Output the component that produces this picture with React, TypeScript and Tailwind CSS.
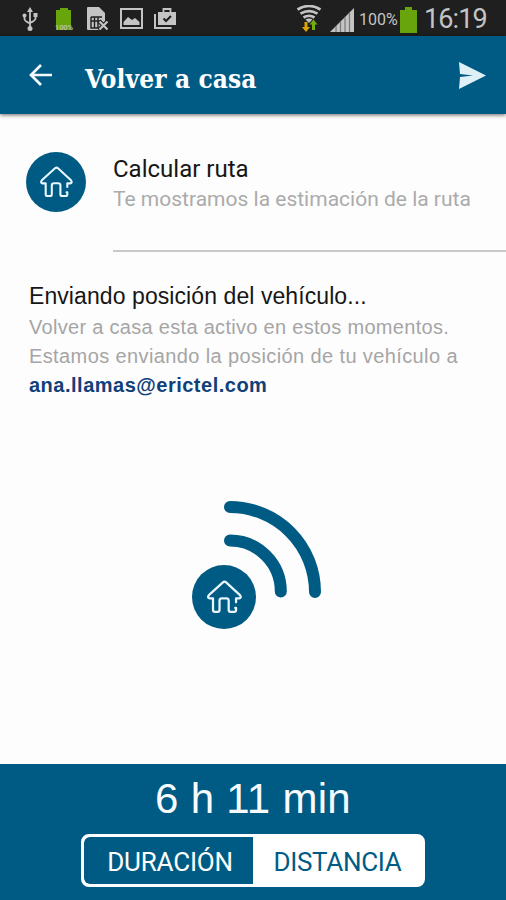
function HomeIcon({ className }: { className: string }) {
  return (
    <svg viewBox="0 0 60 60" className={className} fill="none">
      <circle cx="30" cy="30" r="30" fill="#005b84" />
      <path
        d="M41.300 35v-3.600h2.900q2.600-.8.8-3.100L32 16.300q-1.500-1.300-3 0L15.800 28.300q-1.800 2.300.8 3.100h3.100v10.800q0 1.800 1.800 1.800h2.600q1.700 0 1.700-1.800v-8.700q0-2.200 2.200-2.200h4.200q2.200 0 2.200 2.200v8.700q0 1.800 1.800 1.800h3.300q1.800 0 1.800-1.800V40.200h-.8"
        stroke="#e8f6ff"
        strokeWidth="2.100"
        strokeLinecap="round"
        strokeLinejoin="round"
      />
    </svg>
  );
}

function StatusBar() {
  return (
    <div className="flex h-9 shrink-0 items-center bg-[#1f1f1f] pl-[21px] font-[Roboto,sans-serif] text-[#c4c4c4]">
      <svg viewBox="0 0 18 24" className="mt-px h-6 w-[18px]" fill="none" stroke="#c4c4c4" strokeWidth="1.800">
        <path d="M9 3v19M3.500 9v3q0 2 5.500 4.500M14.500 8v3.500q0 2-5.500 4.500" />
        <path d="M9 0l3 5H6z" fill="#c4c4c4" stroke="none" />
        <circle cx="9" cy="21.500" r="2.500" fill="#c4c4c4" stroke="none" />
        <circle cx="3.500" cy="8.500" r="2" fill="#c4c4c4" stroke="none" />
        <path d="M12.500 6h4v4h-4z" fill="#c4c4c4" stroke="none" />
      </svg>

      <svg viewBox="0 0 20 24" className="ml-[15px] mt-px h-6 w-5">
        <path d="M6 1h8v2h3v20H2V3h4z" fill="#68a50c" />
        <text x="10" y="22.500" textAnchor="middle" textLength="18" fontSize="7.500" fontWeight="700" fill="#b5bda8">100%</text>
      </svg>

      <svg viewBox="0 0 22 24" className="ml-[13px] mt-px h-6 w-[22px]" fill="none">
        <path d="M1 0h11l6 6v10l-5 7H1q-1 0-1-1V1q0-1 1-1z" fill="#c4c4c4" />
        <path d="M4 10h11M4 10v11h8M4 14h10M7.500 10v11M11 10v11" stroke="#1f1f1f" strokeWidth="1.400" />
        <path d="M12 14l9 9M21 14l-9 9" stroke="#1f1f1f" strokeWidth="4.500" />
        <path d="M12.500 14.500l8 8M20.500 14.500l-8 8" stroke="#c4c4c4" strokeWidth="2.200" />
      </svg>

      <svg viewBox="0 0 23 21" className="ml-[11px] h-[21px] w-[23px]" fill="none">
        <path d="M1 1h21v19H1z" stroke="#c4c4c4" strokeWidth="2" />
        <path d="M3.500 17v-3l4.500-5 4 3 3-2 4.500 4v3z" fill="#c4c4c4" />
      </svg>

      <svg viewBox="0 0 23 21" className="ml-[11px] h-[21px] w-[23px]" fill="none">
        <path d="M1 6v14h16.500" stroke="#c4c4c4" strokeWidth="2" />
        <path d="M4 4h18v13H4z" fill="#c4c4c4" />
        <path d="M9.500 4V1h7v3" stroke="#c4c4c4" strokeWidth="1.800" />
        <path d="M9.500 10.500l2.500 2.500 5-5" stroke="#1f1f1f" strokeWidth="2" />
      </svg>

      <svg viewBox="0 0 26 27" className="ml-[119px] mt-px h-[27px] w-[26px]" fill="none">
        <g stroke="#c4c4c4" strokeWidth="2.700">
          <path d="M1.500 4.500q11.500-7 23 0" />
          <path d="M4.500 8.700q8.500-5 17 0" />
          <path d="M7.500 12.500q5.500-3.500 11 0" />
        </g>
        <path d="M9.500 14.500q3.500-2 7 0L13 18z" fill="#c4c4c4" />
        <path d="M8.500 17h3v5H14l-4 5-4-5h2.500z" fill="#dda500" />
        <path d="M17.500 14.500l4 5H19v5.500h-3v-5.500h-2.500z" fill="#72ad0c" />
      </svg>

      <svg viewBox="0 0 24 24" className="ml-2 mt-1 h-6 w-6">
        <path d="M24 0v24H0z" fill="#c4c4c4" />
        <path d="M6 18v6M10.500 13v11M15 9v15M19.500 4v20" stroke="#777" strokeWidth="1.200" />
      </svg>
      <span className="ml-[5px] mt-[3px] w-[40px] whitespace-nowrap text-[16px] leading-5">100%</span>
      <svg viewBox="0 0 17 26" className="ml-px mt-[3px] h-[26px] w-[17px]">
        <path d="M5 0h7v3h5v23H0V3h5z" fill="#68a50c" />
      </svg>
      <span className="ml-[7px] mt-0.5 whitespace-nowrap text-[27px] leading-8 tracking-[-0.900px]">16:19</span>
    </div>
  );
}

function Header() {
  return (
    <header className="relative flex h-[78px] shrink-0 items-center bg-[#005b84] shadow-[0_1px_4px_rgba(0,0,0,0.6)]">
      <svg viewBox="0 0 24 24" className="ml-7 h-6 w-6" fill="none" stroke="#f4f9fc" strokeWidth="2.700">
        <path d="M24 12H3M13 2L3 12l10 10" />
      </svg>
      <h1 className="ml-[33px] mt-2 whitespace-nowrap font-['DejaVu_Serif_Condensed','DejaVu_Serif',serif] text-[26px] font-bold leading-8 tracking-[0.100px] text-white">
        Volver a casa
      </h1>
      <svg viewBox="0 0 27 27" className="ml-auto mr-5 h-[27px] w-[27px]">
        <path d="M0 0l27 13.500L0 27l1-12 13-1.500L1 12z" fill="#dff1f7" />
      </svg>
    </header>
  );
}

export default function App() {
  return (
    <div className="flex h-[900px] w-[506px] flex-col overflow-hidden bg-[#fdfdfd]">
      <StatusBar />
      <Header />

      <section className="flex pl-[26px] pt-[38px]">
        <HomeIcon className="h-[60px] w-[60px]" />
        <div className="ml-[27px] h-[100px] flex-1 whitespace-nowrap border-b-2 border-[#c8c8c8] font-[Roboto,sans-serif]">
          <h2 className="mt-0.5 text-[24px] leading-[30px] text-[#161616]">Calcular ruta</h2>
          <p className="text-[21px] leading-[31px] text-[#ababab]">Te mostramos la estimación de la ruta</p>
        </div>
      </section>

      <section className="whitespace-nowrap pl-[29px] pt-[28px] font-['Liberation_Sans',sans-serif]">
        <h2 className="text-[23px] leading-[32px] tracking-[0.080px] text-[#161616]">Enviando posición del vehículo...</h2>
        <p className="mt-px text-[20px] leading-[29px] text-[#a5a5a5]">
          <span className="tracking-[0.300px]">Volver a casa esta activo en estos momentos.</span>
          <br />
          <span className="tracking-[0.390px]">Estamos enviando la posición de tu vehículo a</span>
        </p>
        <p className="text-[20px] font-bold leading-[29px] tracking-[0.500px] text-[#10407a]">ana.llamas@erictel.com</p>
      </section>

      <div className="flex flex-1 items-end pb-[135px] pl-[192px]">
        <HomeIcon className="h-16 w-16" />
        <svg
          viewBox="0 0 100 100"
          className="-ml-[34px] mb-[30px] h-[100px] w-[100px]"
          fill="none"
          stroke="#005b84"
          strokeWidth="12"
          strokeLinecap="round"
        >
          <path d="M8 8A85 85 0 0 1 93 93M8 41.500A51 51 0 0 1 58.800 92.500" />
        </svg>
      </div>

      <footer className="flex h-[136px] shrink-0 flex-col items-center bg-[#005b84]">
        <div className="mt-[11px] whitespace-nowrap font-['Liberation_Sans',sans-serif] text-[42px] leading-[48px] tracking-[0.300px] text-[#f8fbfd]">
          6 h 11 min
        </div>
        <div className="mt-[11px] flex h-[53px] w-[344px] overflow-hidden rounded-lg border-[3px] border-white bg-white font-[Roboto,sans-serif] text-[26px]">
          <button className="w-[169px] rounded-l-md bg-[#005b84] pl-[3px] pt-[3px] tracking-[-0.200px] text-white">DURACIÓN</button>
          <button className="w-[169px] pt-[3px] tracking-[-0.300px] text-[#005b84]">DISTANCIA</button>
        </div>
      </footer>
    </div>
  );
}
